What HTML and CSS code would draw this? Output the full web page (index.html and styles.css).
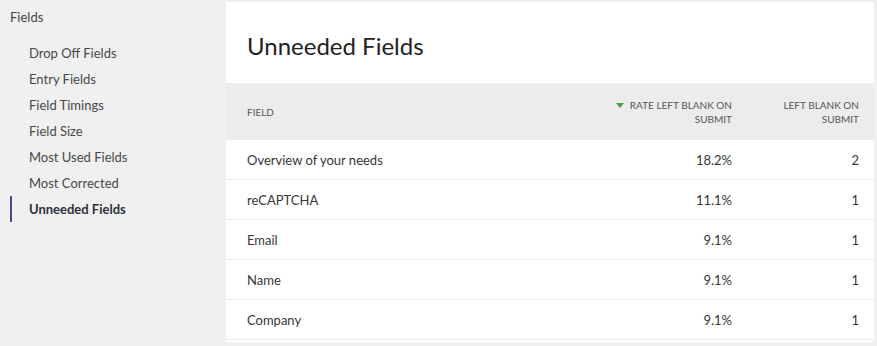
FILE: index.html
```html
<!DOCTYPE html>
<html lang="en">
<head>
    <meta charset="UTF-8">
    <title>Unneeded Fields</title>
    <link rel="stylesheet" href="styles.css">
</head>
<body>

    <!-- Sidebar -->
    <div class="sidebar">
        <div class="sidebar-title">Fields</div>
        <div class="nav-item">Drop Off Fields</div>
        <div class="nav-item">Entry Fields</div>
        <div class="nav-item">Field Timings</div>
        <div class="nav-item">Field Size</div>
        <div class="nav-item">Most Used Fields</div>
        <div class="nav-item">Most Corrected</div>
        <div class="nav-item active">Unneeded Fields</div>
    </div>

    <!-- Report Panel -->
    <div class="panel">
        <h1>Unneeded Fields</h1>
        <table class="report">
            <thead>
                <tr>
                    <th class="col-field">Field</th>
                    <th class="col-rate">
                        <svg class="sort-icon" width="8" height="5" viewBox="0 0 8 5"><path d="M0 0h8L4 5z" fill="#4a9e4a"/></svg>Rate left blank on<br>submit
                    </th>
                    <th class="col-count">Left blank on<br>submit</th>
                </tr>
            </thead>
            <tbody>
                <tr><td>Overview of your needs</td><td class="num">18.2%</td><td class="num">2</td></tr>
                <tr><td>reCAPTCHA</td><td class="num">11.1%</td><td class="num">1</td></tr>
                <tr><td>Email</td><td class="num">9.1%</td><td class="num">1</td></tr>
                <tr><td>Name</td><td class="num">9.1%</td><td class="num">1</td></tr>
                <tr><td>Company</td><td class="num">9.1%</td><td class="num">1</td></tr>
            </tbody>
        </table>
    </div>

</body>
</html>
```

FILE: styles.css
```css
/* General */
body {
    margin: 0;
    display: flex;
    align-items: flex-start;
    background-color: #f0f0f0;
    font-family: Lato, "Open Sans", sans-serif;
    font-size: 13px;
    color: #333;
}

/* Sidebar */
.sidebar {
    width: 226px;
    flex-shrink: 0;
    padding-top: 4px;
}
.sidebar-title {
    padding-left: 10px;
    line-height: 26px;
    color: #444;
    margin-bottom: 10px;
}
.nav-item {
    margin-left: 10px;
    padding: 2px 0 2px 17px;
    line-height: 22px;
    border-left: 2px solid transparent;
    color: #484848;
}
.nav-item.active {
    border-left-color: #4b4a8c;
    font-weight: bold;
    color: #2f2f3a;
}

/* Panel */
.panel {
    flex: 1;
    margin: 2px 3px 0 0;
    padding-bottom: 2px;
    background-color: white;
}
h1 {
    margin: 0;
    padding: 29px 20px 22px 21px;
    font-size: 24px;
    line-height: 30px;
    font-weight: normal;
    color: #222;
}

/* Table */
.report {
    width: 100%;
    border-collapse: collapse;
}
.report th {
    height: 57px;
    padding: 0 15px 0 21px;
    background-color: #ececec;
    font-size: 10px;
    line-height: 14px;
    font-weight: normal;
    text-transform: uppercase;
    color: #555;
    vertical-align: middle;
}
.report th.col-field {
    text-align: left;
}
.report th.col-rate,
.report th.col-count {
    text-align: right;
    padding-left: 0;
}
.col-rate {
    width: 140px;
}
.col-count {
    width: 112px;
}
.sort-icon {
    margin-right: 6px;
    vertical-align: 1px;
}
.report td {
    height: 39px;
    padding: 0 15px 0 21px;
    border-bottom: 1px solid #ececec;
    color: #363636;
}
.report td.num {
    text-align: right;
    padding-left: 0;
}
```
